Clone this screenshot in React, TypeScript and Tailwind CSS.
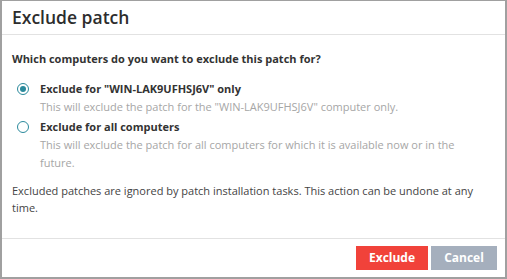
import React from "react";

function Radio({ checked }: { checked: boolean }) {
  return (
    <span className="mt-[3px] flex h-[12px] w-[12px] shrink-0 items-center justify-center rounded-full border border-[#2b8a9c] bg-white">
      {checked && <span className="h-[6px] w-[6px] rounded-full bg-[#2b8a9c]" />}
    </span>
  );
}

export default function App() {
  return (
    <div
      className="flex h-[279px] w-[507px] flex-col border-x-2 border-t border-b-2 border-[#a0a0a0] bg-white text-[#333]"
      style={{ fontFamily: '"Open Sans", "Liberation Sans", sans-serif' }}
    >
      <div className="flex h-[34px] shrink-0 items-center border-b border-[#e2e2e2] pl-[10px]">
        <h1 className="text-[17.5px] font-semibold leading-none text-[#2d2d2d]">Exclude patch</h1>
      </div>
      <div className="flex flex-1 flex-col px-[10px] pt-[15px]">
        <p className="text-[11px] font-bold leading-[18px] text-[#333]">
          Which computers do you want to exclude this patch for?
        </p>
        <div className="mt-[12px] flex flex-col gap-[2px] pl-[5px]">
          <div className="flex gap-[11px]">
            <Radio checked />
            <div className="flex flex-col">
              <span className="text-[11px] font-bold leading-[18px] text-[#333]">
                Exclude for "WIN-LAK9UFHSJ6V" only
              </span>
              <span className="text-[11px] leading-[18px] text-[#a6a6a6]">
                This will exclude the patch for the "WIN-LAK9UFHSJ6V" computer only.
              </span>
            </div>
          </div>
          <div className="flex gap-[11px]">
            <Radio checked={false} />
            <div className="flex flex-col pr-[40px]">
              <span className="text-[11px] font-bold leading-[18px] text-[#333]">
                Exclude for all computers
              </span>
              <span className="text-[11px] leading-[18px] text-[#a6a6a6]">
                This will exclude the patch for all computers for which it is available now or in the future.
              </span>
            </div>
          </div>
        </div>
        <p className="mt-[10px] pr-[20px] text-[11px] leading-[17px] text-[#444]">
          Excluded patches are ignored by patch installation tasks. This action can be undone at any time.
        </p>
      </div>
      <div className="flex h-[39px] shrink-0 items-center justify-end gap-[3px] border-t border-[#e2e2e2] pr-[8px]">
        <button className="h-[24px] w-[72px] bg-[#f1423a] text-[12px] font-bold text-white">Exclude</button>
        <button className="h-[24px] w-[66px] bg-[#a5afbd] text-[12px] font-bold text-white">Cancel</button>
      </div>
    </div>
  );
}
